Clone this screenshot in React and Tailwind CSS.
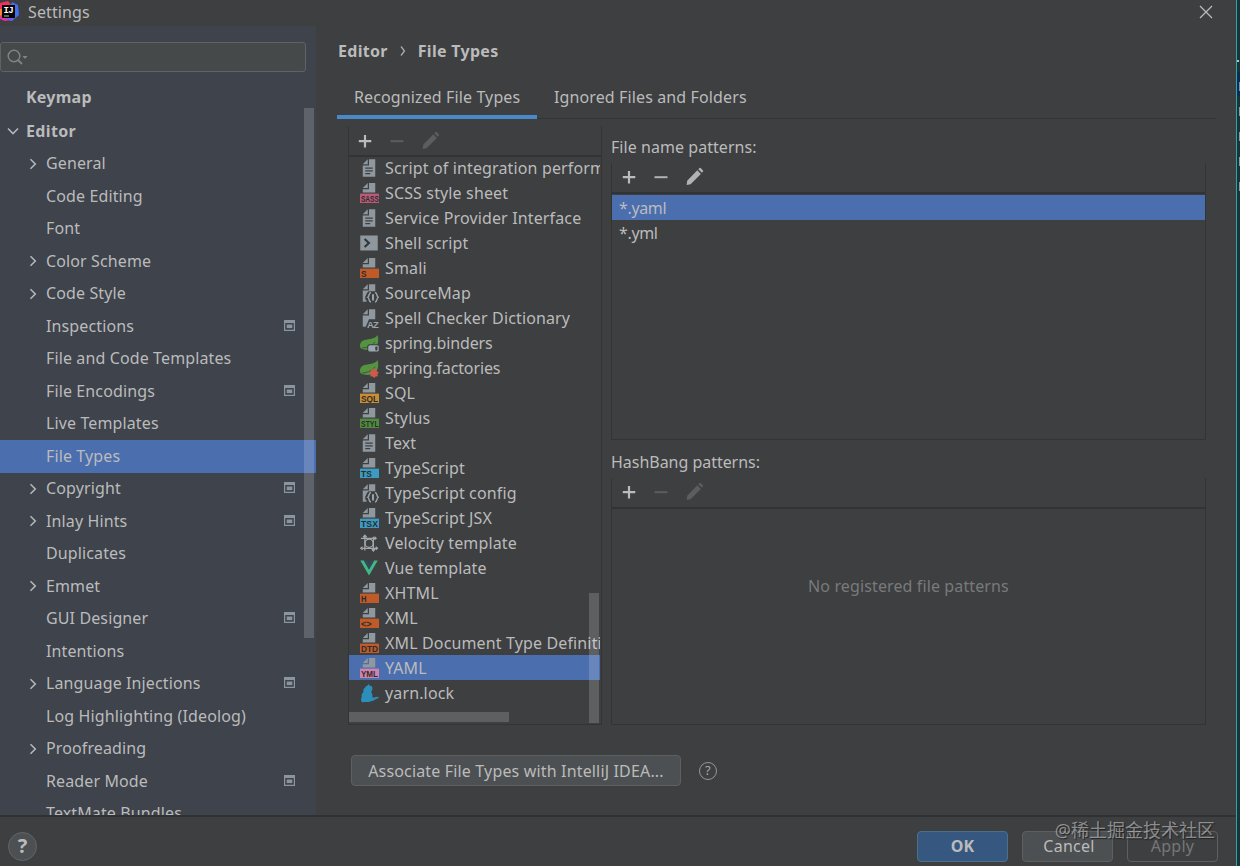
import React, { useState } from "react";

const treeItems = [
    { name: "General", arrow: true },
    { name: "Code Editing" },
    { name: "Font" },
    { name: "Color Scheme", arrow: true },
    { name: "Code Style", arrow: true },
    { name: "Inspections", project: true },
    { name: "File and Code Templates" },
    { name: "File Encodings", project: true },
    { name: "Live Templates" },
    { name: "File Types" },
    { name: "Copyright", arrow: true, project: true },
    { name: "Inlay Hints", arrow: true, project: true },
    { name: "Duplicates" },
    { name: "Emmet", arrow: true },
    { name: "GUI Designer", project: true },
    { name: "Intentions" },
    { name: "Language Injections", arrow: true, project: true },
    { name: "Log Highlighting (Ideolog)" },
    { name: "Proofreading", arrow: true },
    { name: "Reader Mode", project: true },
    { name: "TextMate Bundles" },
];

const fileTypes = [
    { name: "Script of integration performance", icon: "text" },
    { name: "SCSS style sheet", icon: "badge", label: "SASS", color: "#b75b79" },
    { name: "Service Provider Interface", icon: "text" },
    { name: "Shell script", icon: "shell" },
    { name: "Smali", icon: "badge", label: "S", color: "#bf5b28" },
    { name: "SourceMap", icon: "braces" },
    { name: "Spell Checker Dictionary", icon: "az" },
    { name: "spring.binders", icon: "binders" },
    { name: "spring.factories", icon: "factories" },
    { name: "SQL", icon: "badge", label: "SQL", color: "#c98d34" },
    { name: "Stylus", icon: "badge", label: "STYL", color: "#4f8b3c" },
    { name: "Text", icon: "text" },
    { name: "TypeScript", icon: "badge", label: "TS", color: "#3c9bc0" },
    { name: "TypeScript config", icon: "braces" },
    { name: "TypeScript JSX", icon: "badge", label: "TSX", color: "#3c9bc0" },
    { name: "Velocity template", icon: "velocity" },
    { name: "Vue template", icon: "vue" },
    { name: "XHTML", icon: "badge", label: "H", color: "#bf5b28" },
    { name: "XML", icon: "badge", label: "<>", color: "#bf5b28" },
    { name: "XML Document Type Definition", icon: "badge", label: "DTD", color: "#bf5b28" },
    { name: "YAML", icon: "badge", label: "YML", color: "#cf84ae" },
    { name: "yarn.lock", icon: "yarn" },
];

// width of the badge text for 1, 2, 3 and 4 letters
const badgeWidths = [4.4, 8.6, 13.6, 14.2];

function FileIcon({ icon, label, color }) {
    const gray = "#8f989e";
    return (
        <svg width="20" height="20" viewBox="0 0 16 16" className="shrink-0">
            {icon === "text" && (
                <g fill={gray}>
                    <path d="M7 1 3 5h4z" />
                    <path fillRule="evenodd" d="M8 1v5H3v9h10V1zM5 7.6h6v1H5zm0 2.2h6v1H5zm0 2.2h4v1H5z" />
                </g>
            )}
            {icon === "badge" && (
                <>
                    <path fill={gray} d="M7 0 3 4h4zM8 0v5H3v2.600h10V0z" />
                    <rect x="0.8" y="8.5" width="15.2" height="7.5" fill={color} />
                    <text
                        x="1.6"
                        y="14.800"
                        textLength={badgeWidths[label.length - 1]}
                        lengthAdjust="spacingAndGlyphs"
                        fontSize="7.2"
                        fontWeight="600"
                        letterSpacing="0"
                        fontFamily="'Liberation Sans', sans-serif"
                        fill="#2f2b2c"
                    >
                        {label}
                    </text>
                </>
            )}
            {icon === "shell" && (
                <>
                    <path fill={gray} d="M1 2h14v12H1z" />
                    <path d="m4.500 4.800 3.400 3.200-3.400 3.200" fill="none" stroke="#34383b" strokeWidth="1.8" />
                </>
            )}
            {icon === "braces" && (
                <>
                    <path fill={gray} d="M7 1 3 5h4zM8 1v5H3v9h3.200c-.2-1-.4-1.600-1.200-2V10.600c1-.5.8-3.600 3.400-4H13V1z" />
                    <g fill="none" stroke="#9aa4aa" strokeWidth="1.1">
                        <path d="M9.600 7.600c-2 0-1 3-2.600 3.800 1.600.8.6 3.800 2.600 3.800M12.800 7.600c2 0 1 3 2.600 3.800-1.600.8-.6 3.800-2.600 3.800" />
                        <path d="M11.200 9v5" strokeWidth="1.6" />
                    </g>
                </>
            )}
            {icon === "az" && (
                <>
                    <path fill={gray} d="M7 1 3 5h4zM8 1v5H3v9h2.400l2.600-6h5V1z" />
                    <text x="6.300" y="16" fontSize="7.600" fontWeight="700" textLength="9.700" fontFamily="'Liberation Sans', sans-serif" fill="#9aa4aa">AZ</text>
                </>
            )}
            {(icon === "binders" || icon === "factories") && (
                <>
                    <path fill="#549440" d="M14.900 1.500c.7 3.300.9 6.600-1.200 9.500-2.800 3.100-8.600 3-11.700 1.600C.2 11.300.4 7.500 3 6.100c3.200-1.800 9.100-.3 11.900-4.600z" />
                    <path d="M2.500 12c4-.2 8-1.700 10.400-5" stroke="#3c3f41" strokeWidth=".6" fill="none" />
                </>
            )}
            {icon === "binders" && (
                <>
                    <rect x="6.600" y="9" width="9.600" height="6.400" rx="1.800" fill="#3c3f41" />
                    <rect x="7.400" y="9.800" width="8.400" height="5" rx="1.300" fill="#9aa7b0" />
                    <rect x="13" y="10.700" width="1.800" height="3.200" rx=".7" fill="#3c3f41" />
                </>
            )}
            {icon === "factories" && (
                <path fill="#cc5a4d" d="m11.200 7.800 1.100 1.500 1.700-.5.200 1.800 1.800.9-1.300 1.300.5 1.700-1.800.2-1.300 1.300-1.300-1.300-1.900-.1.500-1.700L8 11.600l1.600-.9.300-1.900 1 .4z" />
            )}
            {icon === "velocity" && (
                <g fill="none" stroke="#a1a9ae" strokeWidth="1">
                    <path d="M4.700 14V2.200M3.300 3.400l1.400-1.600 1.400 1.600M1.500 4.200h11.800M12.400 3l1.300 1.200-1.300 1.200" />
                    <path d="M11.500 3v11M10.300 13l1.200 1.400 1.200-1.400M2.600 12.200h11.800M13.400 11l1.400 1.200-1.400 1.200M2.800 11l-1.400 1.200 1.400 1.200" />
                    <circle cx="8.100" cy="8.200" r="3.300" />
                </g>
            )}
            {icon === "vue" && (
                <>
                    <path fill="#41b883" d="M1 2h2.900L8 9.200 12.100 2H15L8 14z" />
                    <path fill="#35495e" d="M3.900 2h2.500L8 4.900 9.600 2h2.500L8 9.200z" />
                </>
            )}
            {icon === "yarn" && (
                <path fill="#2c8ebb" d="M7.600.9c.8.200 1.100 1.100 1.300 1.500.9-.2 1.600 0 1.600.5.500 1.800.1 3.100-.9 4.300 1 1.100 1.400 2.400 1.100 4.400.9.400 2.500-.7 4.400-.7.700.1.800.9.200 1.200-2 .4-3.300 2.100-5.600 2.400-1.700.7-4.600.9-5.600.7-1.300.6-2.600-.1-2.300-1.300-.7-1.300.5-2.600.4-2.600-.5-2 .3-3.300 1.400-4.200-.4-1.500.2-2.700 1.400-3.500-.1-1.200 1.100-1.400 1.600-1.500.2-.4.500-.9 1-1.200z" />
            )}
        </svg>
    );
}

function Chevron({ down }) {
    return (
        <svg width="12" height="12" viewBox="0 0 12 12" fill="none" stroke="#b4b6b8" strokeWidth="1.6">
            <path d={down ? "M1 3.500 6 8.500l5-5" : "m3.500 1.200 4.800 4.800-4.800 4.800"} />
        </svg>
    );
}

function ProjectIcon() {
    return (
        <svg width="11" height="11" viewBox="0 0 11 11" fill="#8c949e" className="mb-[2px]">
            <path fillRule="evenodd" d="M0 0h11v11H0zM1.200 3v6.800h8.600V3z" />
            <path d="M2.700 4.500h5.600v3.600H2.700z" />
        </svg>
    );
}

function Toolbar({ remove, edit, className = "pl-[7px] pb-[2px]" }) {
    return (
        <div className={`flex h-[31px] shrink-0 items-center gap-[12px] border-b-2 border-[#313335] ${className}`}>
            <svg width="20" height="20" viewBox="0 0 20 20" stroke="#b9bbbc" strokeWidth="2.2">
                <path d="M10 4v12.500M3.800 10.200h12.500" />
            </svg>
            <svg width="20" height="20" viewBox="0 0 20 20" stroke={remove ? "#b0b2b3" : "#5b5e60"} strokeWidth="2">
                <path d="M3.500 10.200h13" />
            </svg>
            <svg width="20" height="20" viewBox="0 0 20 20" fill={edit ? "#b0b2b3" : "#5b5e60"} className="ml-[2px]">
                <path d="m13.300 2.200 1.200-1.100q.6-.5 1.200 0l2.300 2.300q.6.600 0 1.200l-1.100 1.200zM12.300 3.300l3.600 3.600L5.600 17.300 1.600 18l.6-4.300z" />
            </svg>
        </div>
    );
}

function Logo() {
    return (
        <svg width="19" height="22" viewBox="0 0 19 22" className="shrink-0">
            <path fill="#f0315f" d="M0 3 8 1l4 5-3 12-9-3z" />
            <path fill="#f9823a" d="M0 9h3v6l-3 1z" />
            <path fill="#e0359c" d="m0 16 8-1 2 5-5 1-5-2z" />
            <path fill="#3f6ff0" d="m12 2 6 3 1 10-7 6-4-3 2-12z" />
            <path fill="#7657e8" d="m7 17 8-1-3 5-5-1z" />
            <path fill="#050505" d="M2 5h13v13H2z" />
            <text x="3.500" y="13" fontSize="9" fontWeight="700" letterSpacing="-0.6" fontFamily="'Liberation Mono', monospace" fill="#fff">IJ</text>
            <path fill="#bbb" d="M4 15.500h5v1H4z" />
        </svg>
    );
}

export default function App() {
    const [page, setPage] = useState("File Types");
    const [fileType, setFileType] = useState("YAML");
    const [pattern, setPattern] = useState("*.yaml");

    return (
        <div className="relative flex h-[866px] w-[1240px] overflow-hidden bg-[#3d3f41] font-['Noto_Sans','Noto_Sans_CJK_SC',sans-serif] text-[16px] leading-[25px] tracking-[0.12px] whitespace-nowrap text-[#bbbbbb]">
            <div className="flex w-[1236px] flex-col">
                <div className="flex h-[26px] shrink-0 items-start">
                    <Logo />
                    <span className="ml-[9px] flex-1">Settings</span>
                    <svg width="14" height="14" viewBox="0 0 14 14" stroke="#b8babb" strokeWidth="1.3" className="mt-[5px] mr-[23px]">
                        <path d="m1 1 12 12M13 1 1 13" />
                    </svg>
                </div>

                <div className="flex h-[789px] shrink-0">
                    <div className="relative flex w-[316px] shrink-0 flex-col overflow-hidden bg-[#3e434c] pt-[16px]">
                        <div className="flex h-[30px] w-[306px] shrink-0 items-center rounded-[3px] border border-[#5e6364] bg-[#45494a] pl-[6px]">
                            <svg width="22" height="18" viewBox="0 0 22 18" fill="none" stroke="#7f8586" strokeWidth="1.4">
                                <circle cx="7" cy="8" r="5.8" />
                                <path d="m11 12 4 4" strokeWidth="1.8" />
                                <path d="M15.500 8h5L18 11z" fill="#7f8586" stroke="none" />
                            </svg>
                        </div>

                        <div className="mt-[9px]">
                            <div className="flex h-[34px] items-center pb-[2px] pl-[26px] font-bold tracking-[0.25px]">Keymap</div>
                            <div className="flex h-[32.5px] items-center gap-[7px] pl-[7px] font-bold tracking-[0.35px]">
                                <Chevron down />
                                Editor
                            </div>
                            {treeItems.map((item) => (
                                <div
                                    key={item.name}
                                    onClick={() => setPage(item.name)}
                                    className={`flex h-[32.5px] items-center pl-[27px] pr-[21px] ${page === item.name ? "bg-[#4b6eaf]" : ""}`}
                                >
                                    <span className="w-[19px]">{item.arrow && <Chevron />}</span>
                                    <span className="flex-1">{item.name}</span>
                                    {item.project && <ProjectIcon />}
                                </div>
                            ))}
                        </div>
                        <div className="absolute top-[82px] right-[2px] h-[530px] w-[10px] bg-white/17"></div>
                    </div>

                    <div className="flex w-[920px] flex-col pr-[20px] pl-[21px]">
                        <div className="flex h-[50px] shrink-0 items-center pl-px font-bold tracking-[0.3px]">
                            Editor
                            <svg width="8" height="12" viewBox="0 0 8 12" fill="none" stroke="#a9abac" strokeWidth="1.3" className="mx-[11px]">
                                <path d="m2 1.500 3.500 4.500L2 10.500" />
                            </svg>
                            File Types
                        </div>

                        <div className="flex h-[43px] shrink-0">
                            <div className="w-[200px] border-b-4 border-[#4a88c7] pl-[17px] leading-[43px]">Recognized File Types</div>
                            <div className="flex-1 border-b border-[#323436] pl-[17px] leading-[43px]">Ignored Files and Folders</div>
                        </div>

                        <div className="flex pt-[7px] pl-[11px]">
                            <div className="relative h-[599px] w-[254px] overflow-hidden border-r border-b border-l border-[#323436]">
                                <Toolbar className="pl-[6px]" />
                                <div className="-mt-[2px] w-[251px] overflow-hidden">
                                    {fileTypes.map((type) => (
                                        <div
                                            key={type.name}
                                            onClick={() => setFileType(type.name)}
                                            className={`flex h-[25px] items-center gap-[6px] pl-[10px] ${fileType === type.name ? "bg-[#4b6eaf]" : ""}`}
                                        >
                                            <FileIcon {...type} />
                                            <span className={`pt-[2px] leading-[23px] ${type.name.startsWith("spring") ? "tracking-[-0.12px]" : "tracking-[0.14px]"}`}>
                                                {type.name}
                                            </span>
                                        </div>
                                    ))}
                                </div>
                                <div className="absolute right-[2px] bottom-px h-[130px] w-[10px] bg-white/17"></div>
                                <div className="absolute bottom-[2px] left-0 h-[10px] w-[160px] bg-white/17"></div>
                            </div>

                            <div className="ml-[9px] w-[595px] pt-[9px]">
                                <div className="h-[28px] tracking-[0.05px]">File name patterns:</div>
                                <div className="h-[277px] border-r border-b border-l border-[#323436]">
                                    <div className="pb-px">
                                        <Toolbar remove edit />
                                    </div>
                                    {["*.yaml", "*.yml"].map((p) => (
                                        <div
                                            key={p}
                                            onClick={() => setPattern(p)}
                                            className={`h-[25px] pt-px pl-[7px] tracking-[-0.35px] ${pattern === p ? "bg-[#4b6eaf]" : ""}`}
                                        >
                                            {p}
                                        </div>
                                    ))}
                                </div>
                                <div className="h-[38px] pt-[10px] tracking-[-0.03px]">HashBang patterns:</div>
                                <div className="flex h-[247px] flex-col border-r border-b border-l border-[#323436]">
                                    <Toolbar />
                                    <div className="pt-[65px] text-center text-[#787a7b]">No registered file patterns</div>
                                </div>
                            </div>
                        </div>

                        <div className="mt-[30px] flex items-center pl-[14px]">
                            <button className="h-[31px] w-[330px] rounded-[4px] border border-[#5e6060] bg-[#4c5052] pt-[2px] leading-[25px] tracking-[0.16px]">
                                Associate File Types with IntelliJ IDEA...
                            </button>
                            <div className="ml-[18px] flex size-[18px] items-center justify-center rounded-full border border-[#95989a] text-[13px] leading-none text-[#a5a8aa]">?</div>
                        </div>
                    </div>
                </div>

                <div className="flex h-[51px] shrink-0 items-center border-t-2 border-[#2f3133] pt-[9px] pr-[18px] pl-[8px]">
                    <div className="flex size-[29px] items-center justify-center rounded-full border border-[#626668] bg-[#4c5052] text-[20px] leading-none font-bold">?</div>
                    <div className="flex flex-1 justify-end gap-[14px]">
                        <button className="h-[31px] w-[91px] rounded-[4px] border border-[#4c708c] bg-[#365880] pt-px font-bold">OK</button>
                        <button className="h-[31px] w-[91px] rounded-[4px] border border-[#5e6060] bg-[#4c5052] pt-px pl-[3px] tracking-[0.25px]">Cancel</button>
                        <button className="h-[31px] w-[91px] rounded-[4px] border border-[#5e6060] pt-px text-[#777777] tracking-[0.25px]">Apply</button>
                    </div>
                </div>
            </div>

            {/* editor window peeking out behind the dialog */}
            <div className="w-px bg-[#2aa5a8]"></div>
            <div className="w-[3px] bg-[#1e3338] pt-[60px]">
                <div className="h-[2px] w-[2px] bg-[#b8c4c4]"></div>
                <div className="mt-[10px] h-[24px] bg-[#0d2b50] pt-[10px]">
                    <div className="ml-[2px] h-[9px] bg-[#6a93c4]"></div>
                </div>
                {[0, 1, 2, 3].map((n) => (
                    <div key={n} className="h-[25px] pt-[11px]">
                        <div className="ml-[2px] h-[9px] bg-[#8c9a9c]"></div>
                    </div>
                ))}
            </div>

            <div className="absolute right-[25px] bottom-[23px] text-[18px] tracking-normal text-white/45 [text-shadow:1px_1px_1px_#222]">@稀土掘金技术社区</div>
        </div>
    );
}
